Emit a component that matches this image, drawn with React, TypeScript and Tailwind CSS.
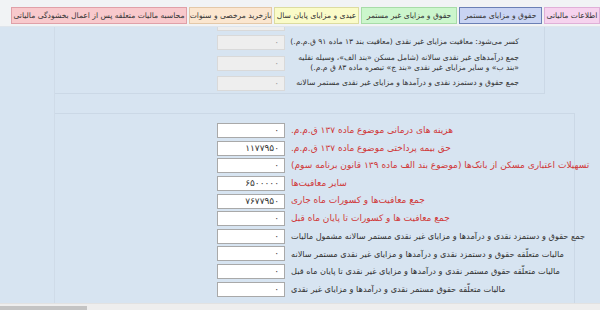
import React from "react";

const font = { fontFamily: '"DejaVu Sans", Tahoma, sans-serif' };

function Box({ v, gray }: { v?: string; gray?: boolean }) {
  return (
    <div
      className={
        "w-[68px] h-[15px] shrink-0 border text-[9px] leading-[13px] text-right pr-[5px] " +
        (gray ? "bg-[#eeeeee] border-[#d9d9d9] text-[#999]" : "bg-white border-[#a9a9a9] text-[#333]")
      }
    >
      {v}
    </div>
  );
}

function Row({ v, label, red, small }: { v?: string; label: string; red?: boolean; small?: boolean }) {
  return (
    <div className="flex items-center h-[17.6px] gap-[6px] w-max">
      <Box v={v} />
      <div
        dir="rtl"
        className={
          "w-max shrink-0 whitespace-nowrap " +
          (small ? "text-[8.2px] " : "text-[9px] ") +
          (red ? "text-[#d03838]" : "text-[#333]")
        }
      >
        {label}
      </div>
    </div>
  );
}

const tabs = [
  { t: "محاسبه مالیات متعلقه پس از اعمال بخشودگی مالیاتی", c: "bg-[#f8c9cc] border-[#e0a0a8] w-[176px]" },
  { t: "بازخرید مرخصی و سنوات", c: "bg-[#fbe6cf] border-[#e4c8a8] w-[83px]" },
  { t: "عیدی و مزایای پایان سال", c: "bg-[#fafbc8] border-[#dcdca0] w-[85px]" },
  { t: "حقوق و مزایای غیر مستمر", c: "bg-[#ccf6cc] border-[#a8dca8] w-[96px]" },
  { t: "حقوق و مزایای مستمر", c: "bg-[#c9d4f3] border-[#6b7fb5] w-[83px]" },
  { t: "اطلاعات مالیاتی", c: "bg-[#f6d3ee] border-[#e0b0d8] w-[56px]" },
];

export default function App() {
  return (
    <div style={font} className="w-[600px] h-[310px] overflow-hidden flex flex-col bg-[#f1f3f5]">
      <div className="h-[27px] shrink-0 flex items-end justify-end gap-[2px] pb-[2px] pl-[12px] border-b border-[#dfe5ec]">
        {tabs.map((x) => (
          <div
            key={x.t}
            dir="rtl"
            className={"h-[17px] shrink-0 overflow-hidden border flex items-center justify-center text-[7.6px] text-[#333] whitespace-nowrap " + x.c}
          >
            {x.t}
          </div>
        ))}
      </div>
      <div className="h-[276px] shrink-0 bg-[#d7e4f1] flex">
        <div className="w-[55px] shrink-0 border-r border-[#cfdbe8]" />
        <div className="flex-1 flex flex-col">
          <div className="h-[67px] w-[490px] shrink-0 border-r border-b border-[#cbd8e6] overflow-hidden flex flex-col justify-end pl-[162px] pb-[1px]">
            <div className="flex items-center h-[18px] gap-[6px] shrink-0">
              <Box gray />
            </div>
            <div className="flex items-center h-[20px] gap-[6px] shrink-0">
              <Box gray v="۰" />
              <span dir="rtl" className="shrink-0 text-[7.6px] text-[#333] w-[228px] whitespace-nowrap">
                کسر می‌شود: معافیت مزایای غیر نقدی (معافیت بند ۱۳ ماده ۹۱ ق.م.م.)
              </span>
            </div>
            <div className="flex items-center h-[22px] gap-[6px] shrink-0">
              <Box gray v="۰" />
              <span dir="rtl" className="shrink-0 text-[7.6px] leading-[10px] text-[#333] w-[228px] whitespace-nowrap">
                جمع درآمدهای غیر نقدی سالانه (شامل مسکن «بند الف»، وسیله نقلیه
                <br />
                «بند ب» و سایر مزایای غیر نقدی «بند ج» تبصره ماده ۸۳ ق م.م.)
              </span>
            </div>
            <div className="flex items-center h-[18px] gap-[6px] shrink-0">
              <Box gray v="۰" />
              <span dir="rtl" className="shrink-0 text-[7.6px] text-[#333] w-[228px] whitespace-nowrap">
                جمع حقوق و دستمزد نقدی و درآمدها و مزایای غیر نقدی مستمر سالانه
              </span>
            </div>
          </div>
          <div className="h-[19px] shrink-0" />
          <div className="w-[520px] h-[190px] shrink-0 border-t border-r border-[#cbd8e6] pl-[162px] pt-[8px] flex flex-col">
            <Row v="۰" red label="هزینه های درمانی موضوع ماده ۱۳۷ ق.م.م." />
            <Row v="۱۱۷۷۹۵۰" red label="حق بیمه پرداختی موضوع ماده ۱۳۷ ق.م.م." />
            <Row v="۰" red label="تسهیلات اعتباری مسکن از بانک‌ها (موضوع بند الف ماده ۱۳۹ قانون برنامه سوم)" />
            <Row v="۶۵۰۰۰۰۰" red label="سایر معافیت‌ها" />
            <Row v="۷۶۷۷۹۵۰" red label="جمع معافیت‌ها و کسورات ماه جاری" />
            <Row v="۰" red label="جمع معافیت ها و کسورات تا پایان ماه قبل" />
            <Row v="۰" small label="جمع حقوق و دستمزد نقدی و درآمدها و مزایای غیر نقدی مستمر سالانه مشمول مالیات" />
            <Row v="۰" small label="مالیات متعلّقه حقوق و دستمزد نقدی و درآمدها و مزایای غیر نقدی مستمر سالانه" />
            <Row v="۰" small label="مالیات متعلّقه حقوق مستمر نقدی و درآمدها و مزایای غیر نقدی تا پایان ماه قبل" />
            <Row v="۰" small label="مالیات متعلّقه حقوق مستمر نقدی و درآمدها و مزایای غیر نقدی  " />
          </div>
        </div>
      </div>
      <div className="flex-1 bg-[#eeeeee] border-t border-[#e2e2e2] flex items-end">
        <div className="w-[87px] h-[4px] bg-[#c4c4c4]" />
      </div>
    </div>
  );
}
